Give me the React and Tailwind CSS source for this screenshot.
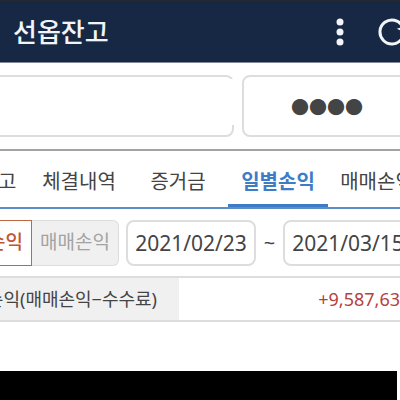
import React, { useState } from "react";

const tabs = [
  { id: "balance", label: "잔고", width: "w-[64px]" },
  { id: "fills", label: "체결내역", width: "w-[98px]" },
  { id: "margin", label: "증거금", width: "w-[100px]" },
  { id: "daily", label: "일별손익", width: "w-[100px]" },
  { id: "trade", label: "매매손익", width: "w-[98px]" },
];

function MoreIcon() {
  return (
    <svg width="8" height="28" viewBox="0 0 8 28" fill="#f1f5fa">
      <circle cx="4" cy="4" r="3.5" />
      <circle cx="4" cy="14" r="3.5" />
      <circle cx="4" cy="24" r="3.5" />
    </svg>
  );
}

function RefreshIcon() {
  return (
    <svg width="28" height="28" viewBox="0 0 28 28" fill="none" stroke="#f1f5fa" strokeWidth="3">
      <path d="M23.2 21.6A12 12 0 1 1 24.4 8" />
      <path d="M18.8 10.8L25.5 14L28 7.5Z" fill="#f1f5fa" stroke="none" />
    </svg>
  );
}

export default function App() {
  const [tab, setTab] = useState("daily");
  const [account, setAccount] = useState("");
  const [pin, setPin] = useState("●●●●");
  const [from, setFrom] = useState("2021/02/23");
  const [to, setTo] = useState("2021/03/15");

  return (
    <div className="min-h-screen flex flex-col overflow-hidden bg-white text-[#444444] font-['Noto_Sans','Noto_Sans_CJK_KR',sans-serif]">
      <header className="h-[63px] shrink-0 flex items-center border-t border-b border-t-[#24292f] border-b-[#7f8799] bg-[#172845] pl-[13px]">
        <h1 className="flex-1 text-[26px] leading-8 font-medium text-[#f1f5fa]">선옵잔고</h1>
        <button type="button" aria-label="메뉴" className="mr-[34px]">
          <MoreIcon />
        </button>
        <button type="button" aria-label="새로고침" className="-mr-1.5">
          <RefreshIcon />
        </button>
      </header>

      <div className="flex shrink-0 gap-2 pt-3 pb-3 border-b-2 border-[#a3a3a3]">
        <div className="relative flex-1 -ml-2">
          <input
            aria-label="계좌번호"
            value={account}
            onChange={(e) => setAccount(e.target.value)}
            className="w-full h-[62px] px-4 rounded-lg border-2 border-[#dddddd] text-xl outline-none"
          />
          {/* open right edge of the account box */}
          <span className="absolute right-0 top-1 bottom-3 w-2 bg-white" />
        </div>
        <input
          aria-label="비밀번호"
          value={pin}
          onChange={(e) => setPin(e.target.value)}
          className="w-[170px] h-[62px] -mr-3 rounded-lg border-2 border-[#dddddd] text-center text-lg outline-none font-['Noto_Sans_CJK_KR',sans-serif]"
        />
      </div>

      <nav className="flex shrink-0 h-[58px] -ml-[34px] -mr-8 border-b-2 border-b-[#5b8ecb]">
        {tabs.map((t) => (
          <button
            key={t.id}
            type="button"
            onClick={() => setTab(t.id)}
            className={`${t.width} shrink-0 pt-2 text-xl whitespace-nowrap border-b-3 ${
              tab === t.id ? "font-bold text-[#3f7cc7] border-[#3f7cc7]" : "border-transparent"
            }`}
          >
            {t.label}
          </button>
        ))}
      </nav>

      <div className="flex shrink-0 items-center h-[67px]">
        <div className="flex h-[46px] -ml-[63px]">
          <button type="button" className="w-[95px] pr-2 text-right text-[19px] font-medium text-[#c0562f] border border-[#c0683f] bg-white">
            일별손익
          </button>
          <button type="button" className="w-[87px] text-[19px] text-[#a3a3a3] bg-[#f0f0f0] border border-l-0 border-[#dddddd] rounded-r-md">
            매매손익
          </button>
        </div>
        <input
          aria-label="시작일"
          value={from}
          onChange={(e) => setFrom(e.target.value)}
          className="ml-[7px] w-[130px] h-[46px] shrink-0 rounded-lg border-2 border-[#dddddd] text-center text-[21px] outline-none"
        />
        <span className="w-[27px] shrink-0 text-center text-xl">~</span>
        <input
          aria-label="종료일"
          value={to}
          onChange={(e) => setTo(e.target.value)}
          className="w-[130px] h-[46px] shrink-0 rounded-lg border-2 border-[#dddddd] text-center text-[21px] outline-none"
        />
      </div>

      <table className="w-full shrink-0 table-fixed border-collapse">
        <tbody>
          <tr className="h-[44px] border-y-2 border-[#dddddd]">
            <th scope="row" className="w-[179px] p-0 bg-[#f0f0f0] text-lg font-normal">
              <div className="flex justify-end pr-[22px] whitespace-nowrap">손익(매매손익−수수료)</div>
            </th>
            <td className="p-0 text-lg text-[#b5413d]">
              <div className="flex justify-end whitespace-nowrap">+9,587,63</div>
            </td>
          </tr>
        </tbody>
      </table>

      <div className="flex-1 mt-[49px] mr-[3px] bg-black" />
    </div>
  );
}
